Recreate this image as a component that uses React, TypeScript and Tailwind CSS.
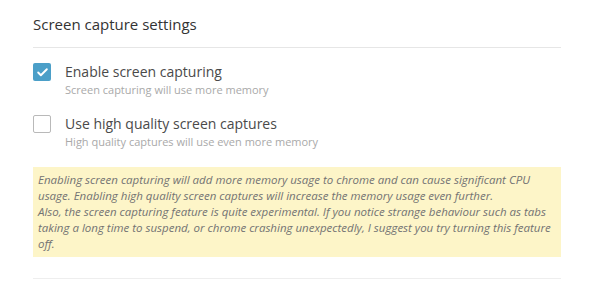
import { Check } from "lucide-react";

const FONT = "font-['Open_Sans','Liberation_Sans',sans-serif]";

function Option({
  checked,
  label,
  hint,
}: {
  checked: boolean;
  label: string;
  hint: string;
}) {
  return (
    <div className="flex items-start gap-[14px]">
      {checked ? (
        <div className="mt-[1px] flex h-[18px] w-[18px] shrink-0 items-center justify-center rounded-[2px] bg-[#4b9fc8]">
          <Check className="h-[13px] w-[13px] text-white" strokeWidth={3.5} />
        </div>
      ) : (
        <div className="mt-[1px] h-[18px] w-[18px] shrink-0 rounded-[2px] border border-[#b9b9b9] bg-white" />
      )}
      <div className="flex flex-col">
        <span className="text-[14px] leading-[20px] text-[#4a4a4a]">{label}</span>
        <span className="text-[11px] leading-[16px] text-[#a9a9a9]">{hint}</span>
      </div>
    </div>
  );
}

export default function App() {
  return (
    <div className={`${FONT} h-[288px] w-[600px] bg-white pl-[33px]`}>
      <div className="w-[528px]">
        <h2 className="pt-[13px] pb-[12px] text-[15px] leading-[22px] text-[#333]">
          Screen capture settings
        </h2>
        <div className="h-px bg-[#e6e6e6]" />

        <div className="mt-[14px] flex flex-col gap-[16px]">
          <Option
            checked
            label="Enable screen capturing"
            hint="Screen capturing will use more memory"
          />
          <Option
            checked={false}
            label="Use high quality screen captures"
            hint="High quality captures will use even more memory"
          />
        </div>

        <div className="mt-[17px] bg-[#fdf5c8] px-[5px] py-[5px] text-[11.5px] italic leading-[16px] text-[#737373]">
          Enabling screen capturing will add more memory usage to chrome and can cause significant CPU
          usage. Enabling high quality screen captures will increase the memory usage even further.
          <br />
          Also, the screen capturing feature is quite experimental. If you notice strange behaviour
          such as tabs taking a long time to suspend, or chrome crashing unexpectedly, I suggest you
          try turning this feature off.
        </div>

        <div className="mt-[21px] h-px bg-[#eeeeee]" />
      </div>
    </div>
  );
}
